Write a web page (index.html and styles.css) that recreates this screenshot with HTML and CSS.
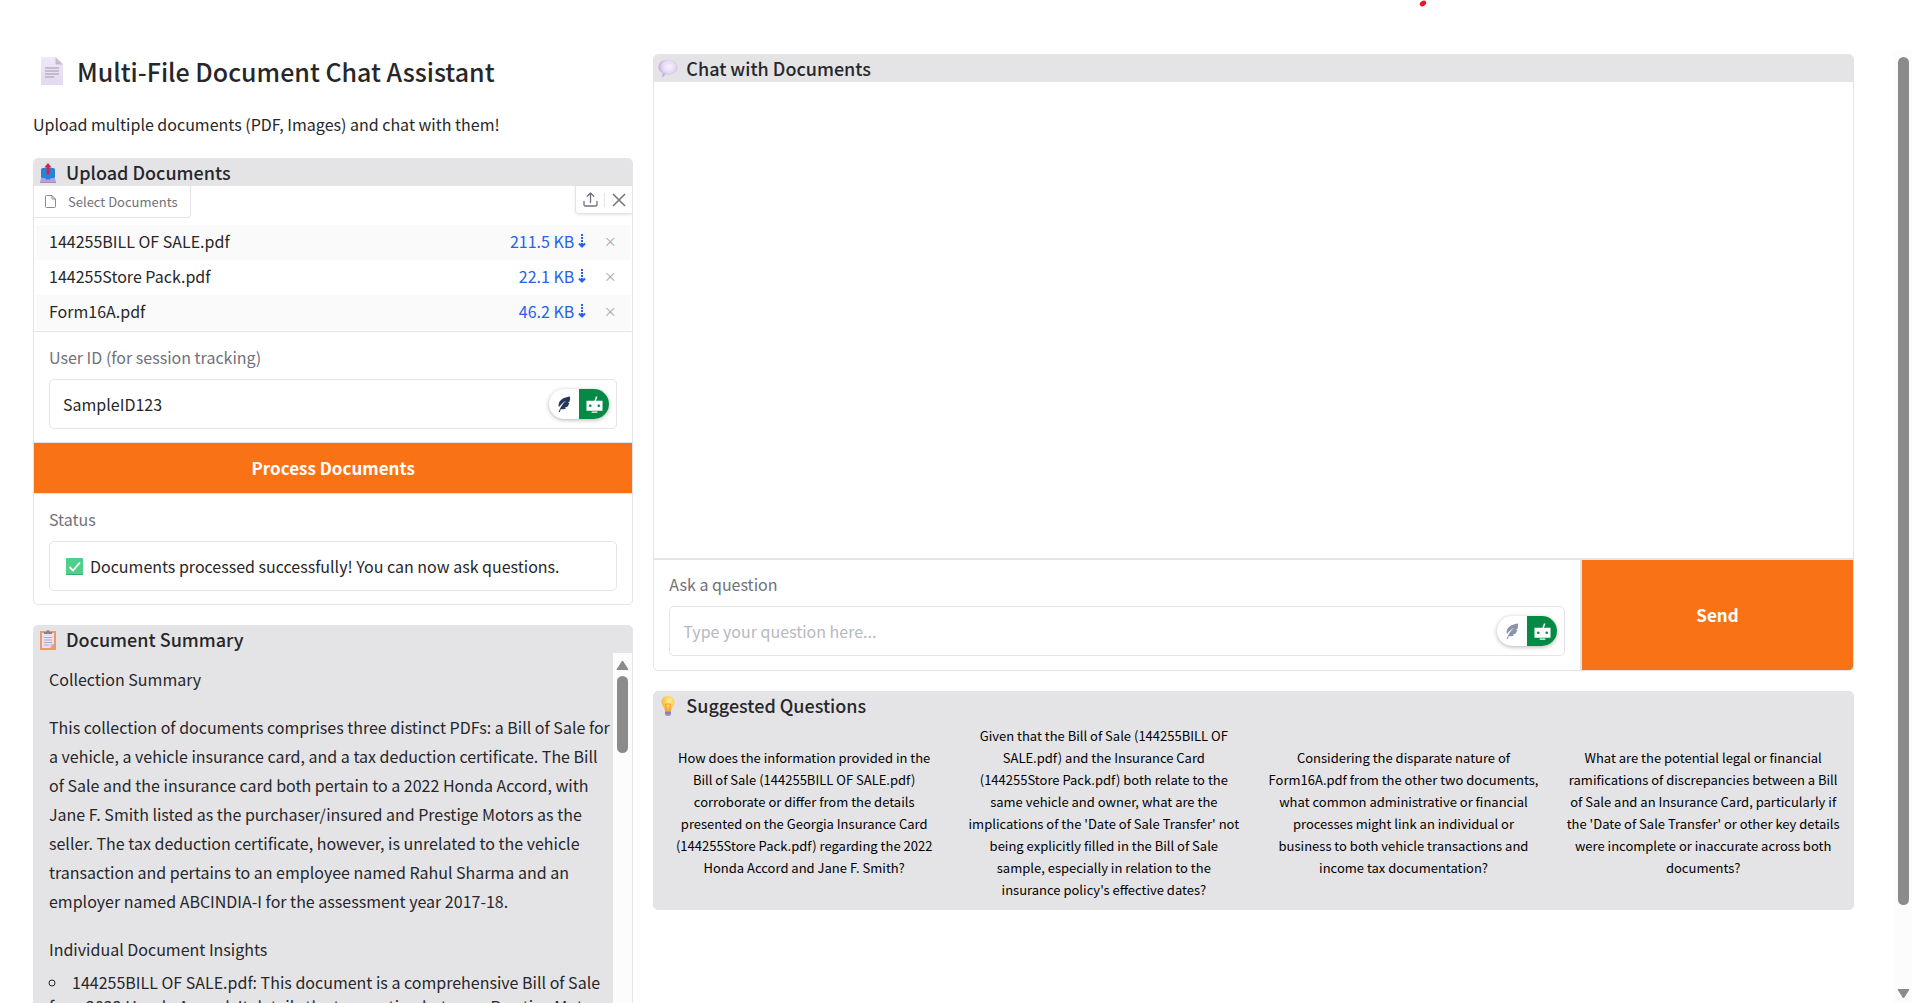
FILE: index.html
```
<!DOCTYPE html>
<html lang="en">
<head>
    <meta charset="UTF-8">
    <meta name="viewport" content="width=device-width, initial-scale=1.0">
    <title>Multi-File Document Chat Assistant</title>
    <link rel="stylesheet" href="styles.css">
</head>
<body>
    <!-- shared icons -->
    <svg width="0" height="0" class="sprite" aria-hidden="true">
        <defs>
            <linearGradient id="paper" x1="0" y1="0" x2="0" y2="1">
                <stop offset="0" stop-color="#efe9f6"/>
                <stop offset="1" stop-color="#e2d8f0"/>
            </linearGradient>
            <radialGradient id="bubble" cx=".55" cy=".4" r=".6">
                <stop offset="0" stop-color="#f7f2fb"/>
                <stop offset=".55" stop-color="#e6dbf2"/>
                <stop offset="1" stop-color="#b79fdc"/>
            </radialGradient>
            <radialGradient id="bulb" cx=".6" cy=".35" r=".7">
                <stop offset="0" stop-color="#fff09a"/>
                <stop offset=".5" stop-color="#ffd05c"/>
                <stop offset="1" stop-color="#f9a83c"/>
            </radialGradient>
            <symbol id="feather" viewBox="0 0 16 20">
                <path d="M15 .5C9.500 1 4 3.500 2.300 7.500c-.7 1.700-.8 3.600-.3 5.500C5 9.500 7.500 7 10.500 5.500 7 8.500 4 12.500 1.500 19l1.600-.2 1.200-3.400c2.200.5 4.700.2 6.400-1.400l-2-.5 3.300-.8c1.300-1.500 1.900-3 2.200-4.700l-1.900.1 2.300-1.500c.5-2.200.8-4.300.4-6.100z"/>
            </symbol>
            <symbol id="robot" viewBox="0 0 18 18">
                <path d="M10.500.5h1.600L10.600 5h6.900v10.500H.5V5h8.400z"/>
                <circle cx="4.500" cy="10.300" r="1.400" fill="#048a45"/>
                <circle cx="13.500" cy="10.300" r="1.400" fill="#048a45"/>
                <path d="M6 16.500h6v1.200H6z"/>
            </symbol>
            <symbol id="download" viewBox="0 0 8 14">
                <path d="M4 0v12" stroke-dasharray="2 1"/>
                <path d="M1 9.500l3 3 3-3"/>
            </symbol>
        </defs>
    </svg>

    <svg class="mark" width="8" height="7" viewBox="0 0 8 7" aria-hidden="true"><ellipse cx="4" cy="3.500" rx="3.400" ry="2.500" transform="rotate(-30 4 3.500)" fill="#e31b23"/></svg>

    <div class="page">
        <main class="columns">
            <div class="left">
                <header>
                    <h1>
                        <svg width="22" height="28" viewBox="0 0 22 28"><path d="M0 0h14.500L22 7.500V28H0z" fill="url(#paper)"/><path d="M14.500 0L22 7.500h-7.500z" fill="#c5bccd"/><path d="M4 11h14M4 14h14M4 17h14M4 20h9" stroke="#b9b0c0" stroke-width="1.300"/></svg>
                        Multi-File Document Chat Assistant
                    </h1>
                    <p class="intro">Upload multiple documents (PDF, Images) and chat with them!</p>
                </header>

                <section class="card">
                    <h2>
                        <svg width="16" height="20" viewBox="0 0 16 20"><path d="M1 15h14l1 4.500H0z" fill="#b9a0d8"/><path d="M0 19h16v1H0z" fill="#a48bc8"/><path d="M1 6.500Q1 5 2.500 5h11Q15 5 15 6.500V14q0 1-1 1h-3l-1 1.500H6L5 15H2q-1 0-1-1z" fill="#2583d8"/><path d="M6.500 11.500V4.500H4.200L8 0l3.800 4.500H9.500v7z" fill="#d6224f"/></svg>
                        Upload Documents
                    </h2>
                    <div class="file-tools">
                        <span class="tab">
                            <svg width="11" height="13" viewBox="0 0 11 13" fill="none" stroke="#8b8b93"><path d="M7 .5H1.500a1 1 0 0 0-1 1v10a1 1 0 0 0 1 1h8a1 1 0 0 0 1-1V4zV4h3.500"/></svg>
                            Select Documents
                        </span>
                        <div class="actions">
                            <button type="button" aria-label="Upload"><svg width="15" height="15" viewBox="0 0 15 15" fill="none" stroke="#71717a" stroke-width="1.300" stroke-linecap="round" stroke-linejoin="round"><path d="M1 9.500v3.200q0 1.300 1.300 1.300h10.400q1.300 0 1.300-1.300V9.500M7.500 10.500V1M4.200 4.300L7.500 1l3.300 3.300"/></svg></button>
                            <button type="button" aria-label="Clear"><svg width="14" height="14" viewBox="0 0 14 14" fill="none" stroke="#71717a" stroke-width="1.500"><path d="M1 1l12 12M13 1L1 13"/></svg></button>
                        </div>
                    </div>
                    <table class="files">
                        <tr>
                            <td>144255BILL OF SALE.pdf</td>
                            <td class="size"><a href="#">211.5 KB<svg width="8" height="14"><use href="#download"/></svg></a></td>
                            <td class="remove"><button type="button" aria-label="Remove">×</button></td>
                        </tr>
                        <tr>
                            <td>144255Store Pack.pdf</td>
                            <td class="size"><a href="#">22.1 KB<svg width="8" height="14"><use href="#download"/></svg></a></td>
                            <td class="remove"><button type="button" aria-label="Remove">×</button></td>
                        </tr>
                        <tr>
                            <td>Form16A.pdf</td>
                            <td class="size"><a href="#">46.2 KB<svg width="8" height="14"><use href="#download"/></svg></a></td>
                            <td class="remove"><button type="button" aria-label="Remove">×</button></td>
                        </tr>
                    </table>
                    <div class="field">
                        <label for="userId">User ID (for session tracking)</label>
                        <div class="box">
                            <input type="text" id="userId" value="SampleID123">
                            <span class="pill"><svg class="feather" width="14" height="17"><use href="#feather"/></svg><span class="bot"><svg width="17" height="17"><use href="#robot"/></svg></span></span>
                        </div>
                    </div>
                    <button type="button" class="primary process">Process Documents</button>
                    <div class="field">
                        <label for="status">Status</label>
                        <div class="box">
                            <svg class="check" width="17" height="17" viewBox="0 0 17 17"><rect width="17" height="17" rx="1" fill="#4fd08a"/><path d="M0 16h17v1H0z" fill="#35ad6c"/><path d="M3.500 9l3.500 3.500 7-8" fill="none" stroke="#fff" stroke-width="1.800"/></svg>
                            <input type="text" id="status" value="Documents processed successfully! You can now ask questions." readonly>
                        </div>
                    </div>
                </section>

                <section class="card gray">
                    <h2>
                        <svg width="16" height="20" viewBox="0 0 16 20"><path d="M0 1h16v19H0z" fill="#ea9a68"/><path d="M2 3h12v11l-3.500 4H2z" fill="#e9e0f3"/><path d="M14 14l-3.500 4v-4z" fill="#c9b6dc"/><path d="M4 4V2h2.500q0-2 1.500-2t1.500 2H12v2z" fill="#8a8291"/><path d="M4 7.500h8M4 10h8M4 12.500h8M4 15h5" stroke="#b3a7c2"/></svg>
                        Document Summary
                    </h2>
                    <div class="scroller">
                        <div class="summary">
                            <p>Collection Summary</p>
                            <p>This collection of documents comprises three distinct PDFs: a Bill of Sale for a vehicle, a vehicle insurance card, and a tax deduction certificate. The Bill of Sale and the insurance card both pertain to a 2022 Honda Accord, with Jane F. Smith listed as the purchaser/insured and Prestige Motors as the seller. The tax deduction certificate, however, is unrelated to the vehicle transaction and pertains to an employee named Rahul Sharma and an employer named ABCINDIA-I for the assessment year 2017-18.</p>
                            <p class="insights">Individual Document Insights</p>
                            <ul>
                                <li>144255BILL OF SALE.pdf: This document is a comprehensive Bill of Sale for a 2022 Honda Accord. It details the transaction between Prestige Motors</li>
                            </ul>
                        </div>
                        <div class="scrollbar inner" aria-hidden="true">
                            <svg width="13" height="10" viewBox="0 0 13 10"><path d="M6.500 1L12 9.500H1z" fill="#8b8b8b" stroke="#8b8b8b" stroke-linejoin="round"/></svg>
                            <span class="thumb"></span>
                        </div>
                    </div>
                </section>
            </div>

            <div class="right">
                <section class="card">
                    <h2>
                        <svg width="20" height="19" viewBox="0 0 20 19"><path d="M10 .5c5.500 0 9.500 3.400 9.500 7.700s-4 7.300-9.200 7.300c-1 0-1.800 0-2.600-.2L4.500 18.500v-4.300C2 12.900.5 10.700.5 8.200.5 3.900 4.500.5 10 .5z" fill="url(#bubble)"/></svg>
                        Chat with Documents
                    </h2>
                    <div class="chat"></div>
                    <form class="ask" onsubmit="return false">
                        <div class="field">
                            <label for="question">Ask a question</label>
                            <div class="box">
                                <input type="text" id="question" placeholder="Type your question here...">
                                <span class="pill"><svg class="feather muted" width="14" height="17"><use href="#feather"/></svg><span class="bot"><svg width="17" height="17"><use href="#robot"/></svg></span></span>
                            </div>
                        </div>
                        <button type="submit" class="primary send">Send</button>
                    </form>
                </section>

                <section class="card gray">
                    <h2>
                        <svg width="20" height="20" viewBox="-3 0 20 20"><path d="M7 0c4 0 6.500 2.800 6.500 6 0 3-2.500 4.500-3.500 9H4C3 10.500.5 9 .5 6 .5 2.800 3 0 7 0z" fill="url(#bulb)"/><path d="M5.500 14.500L4.500 8h5l-1 6.500" fill="none" stroke="#f39a2e"/><path d="M4 15h6v3q0 2-3 2t-3-2z" fill="#a994c4"/><path d="M4 17h6" stroke="#7d669f"/></svg>
                        Suggested Questions
                    </h2>
                    <div class="questions">
                        <button type="button">How does the information provided in the Bill of Sale (144255BILL OF SALE.pdf) corroborate or differ from the details presented on the Georgia Insurance Card (144255Store Pack.pdf) regarding the 2022 Honda Accord and Jane F. Smith?</button>
                        <button type="button">Given that the Bill of Sale (144255BILL OF SALE.pdf) and the Insurance Card (144255Store Pack.pdf) both relate to the same vehicle and owner, what are the implications of the 'Date of Sale Transfer' not being explicitly filled in the Bill of Sale sample, especially in relation to the insurance policy's effective dates?</button>
                        <button type="button">Considering the disparate nature of Form16A.pdf from the other two documents, what common administrative or financial processes might link an individual or business to both vehicle transactions and income tax documentation?</button>
                        <button type="button">What are the potential legal or financial ramifications of discrepancies between a Bill of Sale and an Insurance Card, particularly if the 'Date of Sale Transfer' or other key details were incomplete or inaccurate across both documents?</button>
                    </div>
                </section>
            </div>
        </main>

        <div class="scrollbar outer" aria-hidden="true">
            <span class="thumb"></span>
            <svg width="13" height="10" viewBox="0 0 13 10"><path d="M6.500 9L12 .5H1z" fill="#8b8b8b" stroke="#8b8b8b" stroke-linejoin="round"/></svg>
        </div>
    </div>
</body>
</html>
```
FILE: styles.css
```
* {
    box-sizing: border-box;
}

body {
    margin: 0;
    height: 100vh;
    overflow: hidden;
    background: #fff;
    color: #27272a;
    font-family: "Noto Sans CJK SC", "Open Sans", sans-serif;
    font-size: 16px;
    line-height: 24px;
}

button, input {
    font: inherit;
    color: inherit;
}

button {
    padding: 0;
    border: none;
    background: none;
    cursor: pointer;
}

svg {
    display: block;
    flex: none;
}

.sprite, .mark {
    position: absolute;
}

/* pen mark over the top edge of the page */
.mark {
    top: 0;
    left: 74.2%;
}

.page {
    display: flex;
    height: 100vh;
    padding-top: 51px;
}

.columns {
    flex: 1;
    display: grid;
    grid-template-columns: 1fr 2fr;
    gap: 20px;
    padding: 3px 40px 0 33px;
    align-items: start;
    min-width: 0;
}

.left, .right {
    display: flex;
    flex-direction: column;
    gap: 20px;
    min-width: 0;
}

h1 {
    display: flex;
    align-items: center;
    gap: 14px;
    margin: 0;
    padding-left: 8px;
    font-size: 25px;
    font-weight: 500;
    line-height: 34px;
}

.intro {
    margin: 24px 0 2px;
}

/* Cards */
.card {
    border: 1px solid #e4e4e7;
    border-radius: 5px;
    overflow: hidden;
    background: #fff;
}

.card.gray {
    background: #e4e4e7;
}

h2 {
    display: flex;
    align-items: center;
    margin: 0;
    padding-left: 6px;
    background: #e4e4e7;
    font-size: 18px;
    font-weight: 500;
    line-height: 27px;
}

h2 svg {
    margin-right: 10px;
}

.right h2 {
    padding-left: 4px;
}

.right h2 svg {
    margin-right: 8px;
}

/* File list */
.file-tools {
    display: flex;
    justify-content: space-between;
    align-items: flex-start;
}

.tab {
    display: flex;
    align-items: center;
    gap: 12px;
    height: 32px;
    padding: 0 12px 0 11px;
    border: 1px solid #e4e4e7;
    border-width: 0 1px 1px 0;
    border-radius: 0 0 4px 0;
    color: #71717a;
    font-size: 13px;
}

.actions {
    display: flex;
    align-items: center;
    height: 28px;
    border: 1px solid #e4e4e7;
    border-width: 0 0 1px 1px;
    border-radius: 0 0 0 4px;
    box-shadow: 0 1px 3px rgba(0,0,0,0.1);
}

.actions button {
    display: flex;
    justify-content: center;
    width: 28px;
}

.actions button + button {
    border-left: 1px solid #e4e4e7;
}

.files {
    width: calc(100% - 4px);
    margin: 7px 2px 1px;
    border-collapse: collapse;
}

.files tr:nth-child(odd) {
    background: #fafafa;
}

.files td {
    height: 35px;
    padding: 0 0 3px 13px;
}

.files .size {
    text-align: right;
}

.files a {
    display: inline-flex;
    align-items: center;
    gap: 4px;
    color: #2563eb;
    text-decoration: none;
}

.files a svg {
    fill: none;
    stroke: #2563eb;
    stroke-width: 2px;
}

.files .remove {
    width: 44px;
    padding: 0 0 3px 4px;
    color: #a1a1aa;
    font-size: 13px;
    text-align: center;
}

/* Form fields */
.field {
    padding: 13px 15px;
}

.field label {
    display: block;
    margin-bottom: 10px;
    color: #71717a;
}

.box {
    display: flex;
    align-items: center;
    height: 50px;
    padding: 0 7px 0 13px;
    border: 1px solid #e4e4e7;
    border-radius: 5px;
}

.box input {
    flex: 1;
    min-width: 0;
    padding: 0;
    border: none;
    outline: none;
    background: none;
}

.box input::placeholder {
    color: #b8b8bf;
    opacity: 1;
}

.check {
    margin: 0 7px 0 3px;
}

.files + .field {
    border-top: 1px solid #e4e4e7;
}

.pill {
    display: flex;
    align-items: center;
    height: 30px;
    border-radius: 15px;
    overflow: hidden;
    background: #fff;
    box-shadow: 0 1px 4px rgba(0,0,0,0.3);
}

.feather {
    margin: 0 8px;
    fill: #27375a;
}

.feather.muted {
    fill: #8a94a8;
}

.bot {
    display: flex;
    align-items: center;
    justify-content: center;
    width: 30px;
    height: 30px;
    background: #048a45;
    fill: #fff;
}

.primary {
    background: #f97316;
    color: #fff;
    font-size: 17px;
    font-weight: 700;
}

.process {
    display: block;
    width: 100%;
    height: 52px;
    border: 1px solid #e4e4e7;
    border-width: 1px 0;
}

/* Summary */
.scroller {
    display: flex;
}

.summary {
    flex: 1;
    min-width: 0;
    padding: 12px 0 0 15px;
    line-height: 29px;
}

.summary p {
    margin: 0 0 19px;
}

.summary .insights {
    margin-bottom: 6px;
}

.summary ul {
    margin: 0;
    padding: 0;
    list-style: circle inside;
    line-height: 24px;
}

.scrollbar {
    display: flex;
    flex-direction: column;
    align-items: center;
    background: #fcfcfc;
}

.scrollbar .thumb {
    background: #8b8b8b;
    border-radius: 6px;
}

.scrollbar.inner {
    width: 19px;
    padding-top: 7px;
}

.inner .thumb {
    width: 11px;
    height: 77px;
    margin-top: 6px;
}

.scrollbar.outer {
    justify-content: space-between;
    width: 18px;
    padding: 6px 0 4px;
}

.outer .thumb {
    width: 11px;
    height: 90%;
}

/* Chat */
.chat {
    height: 478px;
    border-bottom: 2px solid #e4e4e7;
}

.ask {
    display: flex;
}

.ask .field {
    flex: 1;
    min-width: 0;
    padding: 12px 15px 14px;
    border-right: 2px solid #e4e4e7;
}

.send {
    width: 271px;
}

.questions {
    display: grid;
    grid-template-columns: repeat(4, 1fr);
    padding: 6px 0 8px;
}

.questions button {
    padding: 0 13px;
    color: #000;
    font-size: 13px;
    line-height: 22px;
    text-align: center;
}
```
